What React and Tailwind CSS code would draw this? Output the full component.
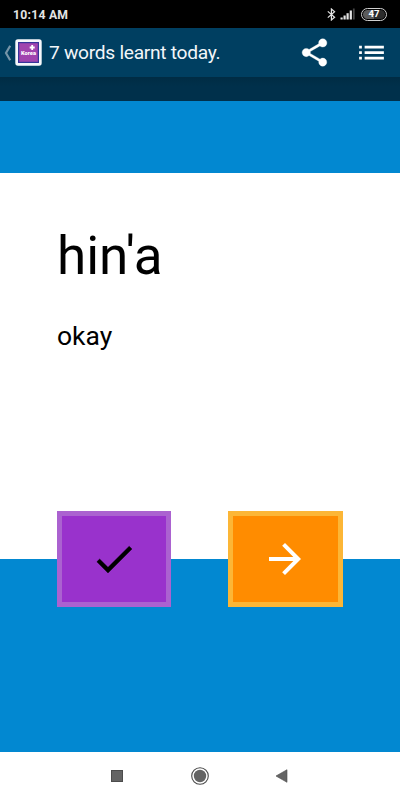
import React from 'react';

function StatusBar() {
  return (
    <div className="h-7 bg-black flex items-center justify-between px-[13px] text-[#e4e4e4]">
      <span className="pt-0.5 text-[12.2px] leading-none font-bold tracking-[0.25px]">10:14 AM</span>
      <div className="flex items-center">
        <svg width="9" height="13" viewBox="0 0 9 13" fill="none" stroke="currentColor" strokeWidth="1.2">
          <path d="M0.8 3.4 L7.6 9.3 L4.4 12 V1 L7.6 3.8 L0.8 9.6" />
        </svg>
        <svg className="ml-1" width="16" height="12" viewBox="0 0 16 12" fill="currentColor">
          <rect x="0.5" y="9.5" width="2.2" height="2" />
          <rect x="3.5" y="7.5" width="2.2" height="4" />
          <rect x="6.5" y="5.2" width="2.2" height="6.3" />
          <rect x="9.7" y="2.5" width="2.2" height="9" />
          <rect x="12.9" y="0.5" width="1.8" height="11" fill="#444444" />
        </svg>
        <div className="ml-[5px] w-[26px] h-[13px] rounded-full border border-[#d0d0d0] p-px">
          <div className="h-full rounded-full bg-linear-to-r from-[#5c5c5c] from-50% to-[#2c2c2c] to-50% flex items-center justify-center text-[9.5px] leading-none font-bold text-white">
            47
          </div>
        </div>
      </div>
    </div>
  );
}

function AppIcon() {
  return (
    <svg width="27" height="27" viewBox="0 0 27 27">
      <rect x="0.3" y="0.3" width="26.4" height="26.4" rx="2.6" fill="#f5f7fb" />
      <rect x="3" y="3" width="21" height="21" fill="#35349a" />
      <rect x="4.2" y="4.2" width="18.6" height="18.6" fill="#a044ae" />
      <path d="M17.2 6v5M14.7 8.5h5" stroke="#ffffff" strokeWidth="1.8" />
      <text x="6" y="16.2" textLength="15" lengthAdjust="spacingAndGlyphs" fontSize="5.2" fontWeight="900" fill="#ffffff">Korea</text>
    </svg>
  );
}

function Header() {
  return (
    <header className="h-[49px] bg-[#003f61] flex items-center text-[#f2f6f9]">
      <svg className="ml-1" width="8" height="16" viewBox="0 0 8 16" fill="none" stroke="#7695a8" strokeWidth="2.2">
        <path d="M6.2 0.8 L2 8 L6.2 15.2" />
      </svg>
      <div className="ml-[3px]">
        <AppIcon />
      </div>
      <h1 className="ml-[7px] pt-px text-[19.2px] leading-none tracking-[-0.29px] whitespace-nowrap">7 words learnt today.</h1>
      <button className="ml-auto text-white">
        <svg width="33" height="33" viewBox="0 0 24 24" fill="currentColor" stroke="currentColor" strokeWidth="0.25">
          <path d="M18 16.08c-.76 0-1.44.3-1.96.77L8.91 12.7c.05-.23.09-.46.09-.7s-.04-.47-.09-.7l7.05-4.11c.54.5 1.25.81 2.04.81 1.66 0 3-1.34 3-3s-1.34-3-3-3-3 1.34-3 3c0 .24.04.47.09.7L8.04 9.81C7.5 9.31 6.79 9 6 9c-1.66 0-3 1.34-3 3s1.34 3 3 3c.79 0 1.5-.31 2.04-.81l7.12 4.16c-.05.21-.08.43-.08.65 0 1.61 1.31 2.92 2.92 2.92 1.61 0 2.92-1.31 2.92-2.92s-1.31-2.92-2.92-2.92z" />
        </svg>
      </button>
      <button className="ml-6 mr-3 text-white">
        <svg width="33" height="33" viewBox="0 0 24 24" fill="currentColor">
          <path d="M3 13h2v-2H3v2zm0 4h2v-2H3v2zm0-8h2V7H3v2zm4 4h14v-2H7v2zm0 4h14v-2H7v2zM7 7v2h14V7H7z" />
        </svg>
      </button>
    </header>
  );
}

function NavBar() {
  return (
    <nav className="h-12 bg-white flex items-center pl-[111px] text-[#646464]">
      <div className="size-3 bg-current border border-[#4c4c4c]"></div>
      <svg className="ml-[68px]" width="18" height="18" viewBox="0 0 18 18">
        <circle cx="9" cy="9" r="8.3" fill="none" stroke="#4a4a4a" strokeWidth="1.1" />
        <circle cx="9" cy="9" r="6.2" fill="currentColor" />
      </svg>
      <svg className="ml-[66px]" width="13" height="14" viewBox="0 0 13 14" fill="currentColor" stroke="#4c4c4c" strokeWidth="0.6">
        <path d="M1 7 L12 0.7 V13.3 Z" />
      </svg>
    </nav>
  );
}

export default function App() {
  return (
    <div className="w-[400px] h-[800px] flex flex-col overflow-hidden bg-[#0288d1] font-[Roboto,sans-serif]">
      <StatusBar />
      <Header />
      <div className="h-6 bg-linear-to-b from-[#002c44] to-[#00304b] to-40%"></div>

      <main className="flex-1 pt-[72px]">
        <div className="h-[386px] bg-white text-black flex flex-col px-[57px] pt-[51px]">
          <p className="text-[53px] leading-[64px]">hin'a</p>
          <p className="mt-8 text-[26.5px] leading-8">okay</p>
          {/* the buttons hang over the lower edge of the card */}
          <div className="mt-auto -mb-12 flex justify-between">
            <button className="w-[114px] h-24 bg-[#9932cc] border-5 border-[#ab62d0] flex items-center justify-center text-black">
              <svg width="48" height="48" viewBox="0 0 24 24" fill="currentColor" stroke="currentColor" strokeWidth="0.2">
                <path d="M9 16.17L4.83 12l-1.42 1.41L9 19 21 7l-1.41-1.41z" />
              </svg>
            </button>
            <button className="w-[115px] h-24 bg-[#ff8c00] border-5 border-[#fcb636] flex items-center justify-center text-white pr-px">
              <svg width="48" height="48" viewBox="0 0 24 24" fill="currentColor">
                <path d="M12 4l-1.41 1.41L16.17 11H4v2h12.17l-5.58 5.59L12 20l8-8z" />
              </svg>
            </button>
          </div>
        </div>
      </main>

      <NavBar />
    </div>
  );
}
